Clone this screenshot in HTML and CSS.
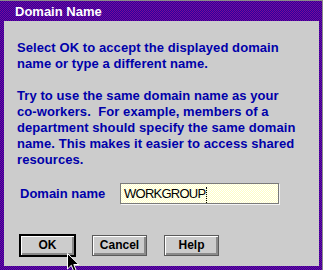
FILE: index.html
```html
<!DOCTYPE html>
<html>
<head>
<meta charset="utf-8">
<link rel="stylesheet" href="styles.css">
</head>
<body>
<div class="window">
  <div class="titlebar">Domain Name</div>
  <div class="panel">
    <p class="msg">Select OK to accept the displayed domain<br>name or type a different name.</p>
    <p class="msg">Try to use the same domain name as your<br>co-workers.&nbsp; For example, members of a<br>department should specify the same domain<br>name. This makes it easier to access shared<br>resources.</p>
    <div class="field">
      <span class="label">Domain name</span>
      <div class="input"><span class="value">WORKGROUP</span><span class="caret"></span></div>
    </div>
    <div class="buttons">
      <div class="btn default">OK</div>
      <div class="btn">Cancel</div>
      <div class="btn help">Help</div>
    </div>
  </div>
  <svg class="cursor" width="13" height="20" viewBox="0 0 13 20">
    <path d="M0.5 0.5 L0.5 16 L4.3 12.3 L6.8 18.5 L9.2 17.5 L6.8 11.5 L11.8 11.5 Z" fill="#000" stroke="#fff" stroke-width="1"/>
  </svg>
</div>
</body>
</html>
```

FILE: styles.css
```css
html, body {
  margin: 0;
  padding: 0;
}
body {
  width: 323px;
  height: 270px;
  overflow: hidden;
  font-family: "Liberation Sans", Arial, sans-serif;
}
.window {
  position: relative;
  box-sizing: border-box;
  width: 323px;
  height: 270px;
  border-top: 1px solid #8a8a8a;
  border-right: 1px solid #8a8a8a;
  padding: 0 3px 4px 4px;
  display: flex;
  flex-direction: column;
  background: repeating-conic-gradient(#7a0a96 0 25%, #2a00a0 0 50%) 0 0 / 2px 2px;
}
.titlebar {
  box-sizing: border-box;
  height: 20px;
  padding: 1px 0 0 11px;
  line-height: 19px;
  font-size: 13px;
  font-weight: bold;
  color: #fff;
}
.panel {
  flex: 1;
  background: #cccccc;
  padding: 19px 0 0 13px;
  display: flex;
  flex-direction: column;
}
.msg {
  margin: 0 0 16px 0;
  font-size: 13px;
  line-height: 16px;
  font-weight: bold;
  color: #0000aa;
  white-space: nowrap;
  letter-spacing: 0.08px;
}
.msg + .msg {
  margin-bottom: 0;
}
.field {
  display: flex;
  align-items: center;
  margin: 15px 0 0 3px;
}
.label {
  width: 100px;
  font-size: 13px;
  font-weight: bold;
  color: #0000aa;
}
.input {
  box-sizing: border-box;
  width: 159px;
  height: 21px;
  border: 1px solid #7a7a7a;
  box-shadow: 1px 1px 0 #f4f4f4;
  background: repeating-conic-gradient(#ffffff 0 25%, #ffffc4 0 50%) 0 0 / 2px 2px;
  display: flex;
  align-items: center;
  padding-left: 3px;
}
.value {
  font-size: 13px;
  color: #000;
  letter-spacing: -0.75px;
}
.caret {
  display: inline-block;
  width: 0;
  height: 16px;
  margin-left: 1px;
  margin-top: 2px;
  border-left: 1px dotted #000;
}
.buttons {
  display: flex;
  align-items: center;
  margin: 30px 0 0 2px;
}
.btn {
  box-sizing: border-box;
  width: 55px;
  height: 21px;
  margin-right: 17px;
  border: 1px solid #5a5a5a;
  background: #cccccc;
  box-shadow: inset 1px 1px 0 #ffffff, inset -2px -2px 0 #8a8a8a;
  font-size: 12px;
  font-weight: bold;
  color: #000;
  display: flex;
  align-items: center;
  justify-content: center;
  padding-bottom: 1px;
}
.btn.default {
  width: 57px;
  height: 23px;
  margin-right: 16px;
  border: 2px solid #000;
}
.cursor {
  position: absolute;
  left: 67px;
  top: 252px;
}
```
